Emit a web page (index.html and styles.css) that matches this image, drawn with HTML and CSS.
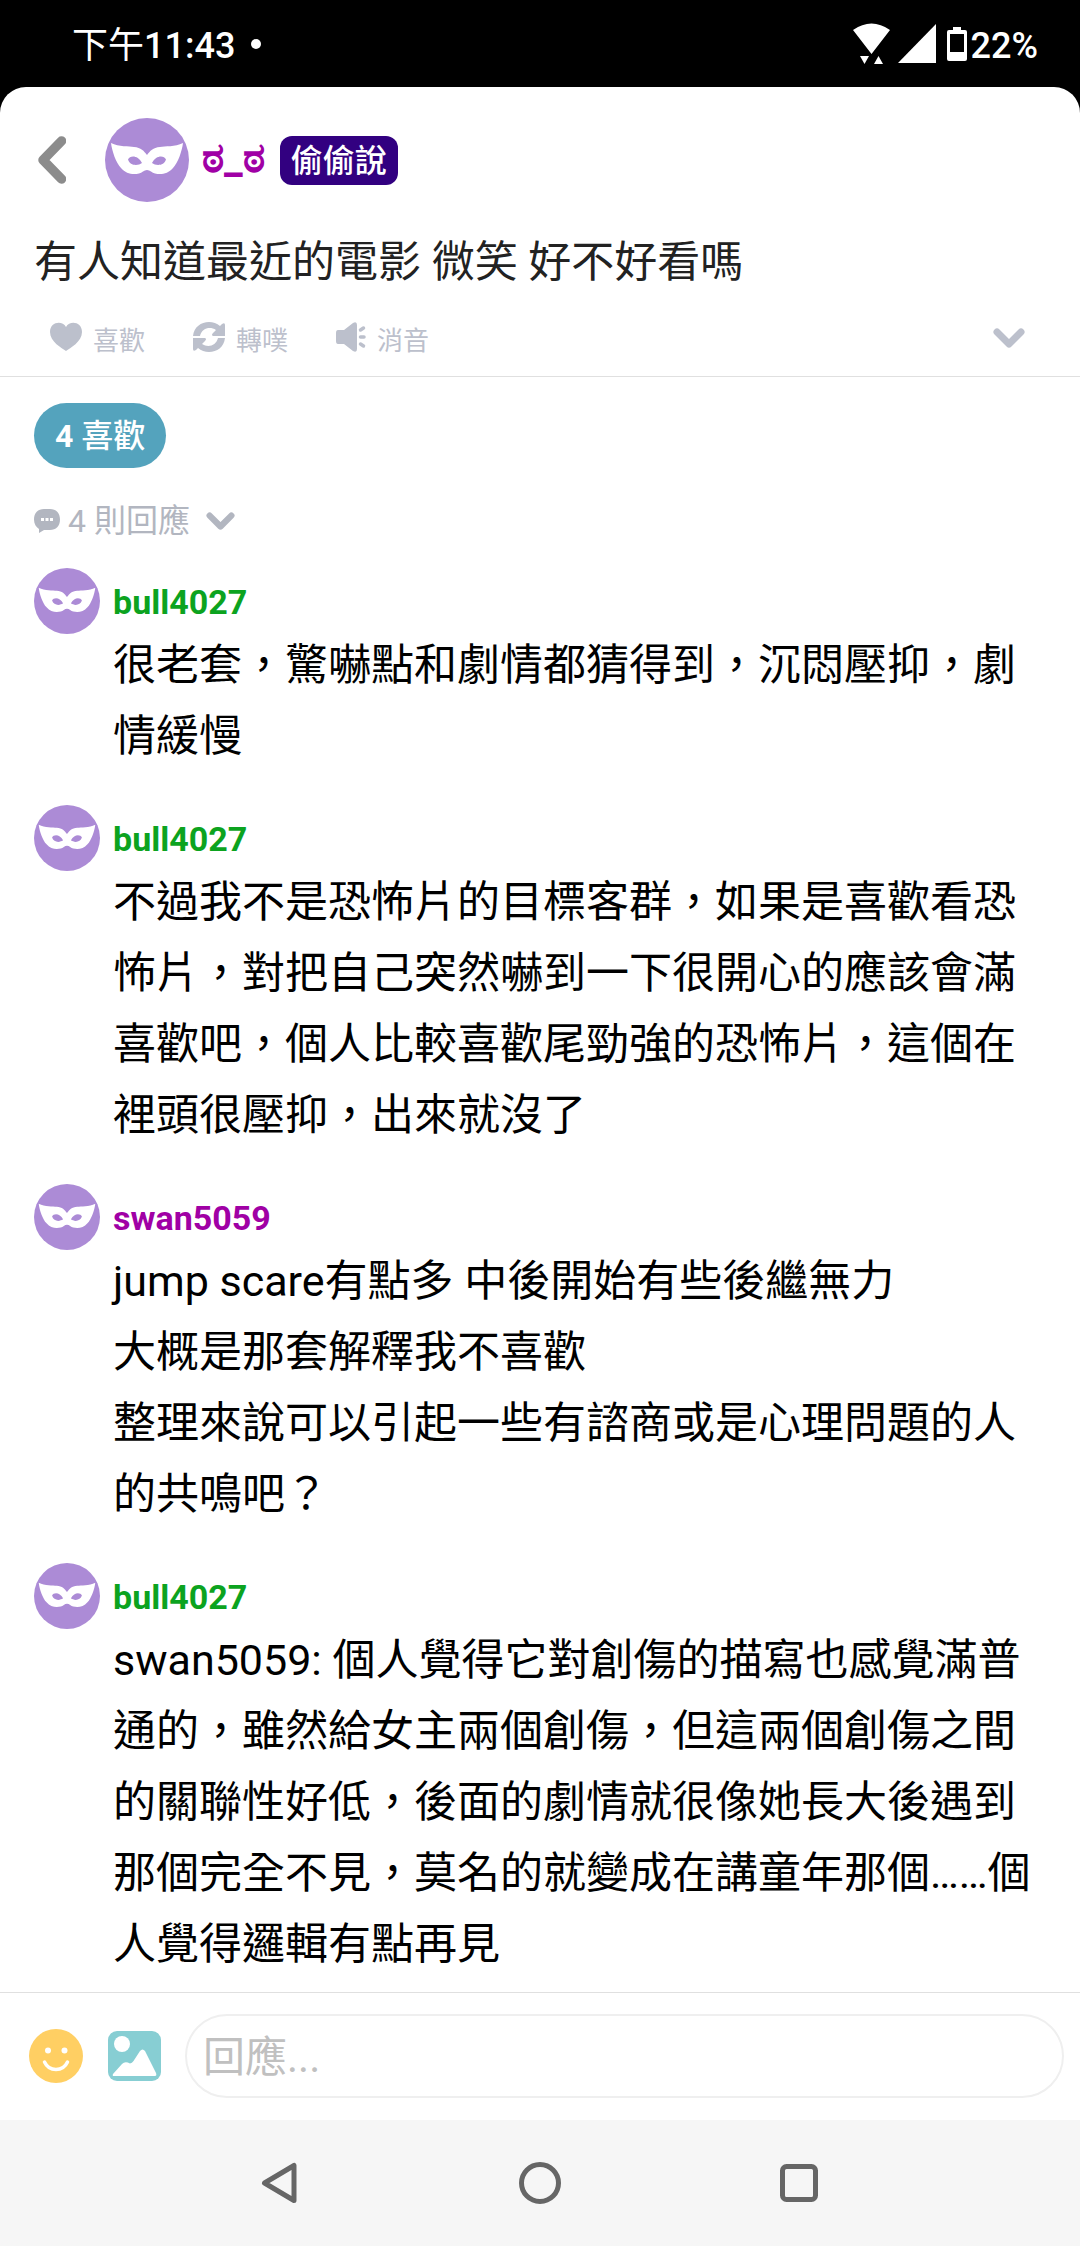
FILE: index.html
```html
<!DOCTYPE html>
<html lang="zh-Hant">
<head>
<meta charset="utf-8">
<meta name="viewport" content="width=device-width, initial-scale=1">
<title>偷偷說</title>
<link rel="stylesheet" href="styles.css">
</head>
<body>
<svg class="defs" aria-hidden="true">
  <symbol id="mask" viewBox="0 0 84 84">
    <circle cx="42" cy="42" r="42" fill="#ac8bd6"/>
    <path fill="#fff" fill-rule="evenodd" d="M6 25C14 29 24 28 29 29C36 29.500 39 33 42 37C45 33 48 29.500 55 29C60 28 70 29 78 25C77 33 73 45 68 50C63 56 56 57 50 55.500C47 55 45 52 42 52C39 52 37 55 34 55.500C28 57 21 56 16 50C11 45 7 33 6 25ZM23 41.500C25 37 33 37 37 45C33 48 25 48 23 41.500ZM61 41.500C59 37 51 37 47 45C51 48 59 48 61 41.500Z"/>
  </symbol>
  <symbol id="chevron" viewBox="0 0 32 21">
    <path d="M4 4L16 16L28 4" fill="none" stroke="currentColor" stroke-width="7" stroke-linecap="round" stroke-linejoin="round"/>
  </symbol>
</svg>

<div class="status">
  <time class="clock">下午<b>11:43</b></time>
  <span class="dot"></span>
  <div class="indicators">
    <svg class="wifi" viewBox="0 0 37 41"><path fill="#fff" d="M0 7Q18.500 -6 37 7L18.500 31ZM7 33H16L11.500 41ZM21 41H30L25.500 33Z"/></svg>
    <svg class="signal" viewBox="0 0 38 39"><path fill="#fff" d="M38 0V39H0Z"/></svg>
    <svg class="battery" viewBox="0 0 20 34"><path fill="#fff" fill-rule="evenodd" d="M6 0H14V3H18Q20 3 20 5V32Q20 34 18 34H2Q0 34 0 32V5Q0 3 2 3H6ZM3 7V25H17V7Z"/></svg>
    <b class="percent">22%</b>
  </div>
</div>

<div class="app">
  <header class="post">
    <div class="author">
      <button class="back" aria-label="返回"><svg viewBox="0 0 28 48"><path d="M23.500 5L5 24L23.500 43" fill="none" stroke="#8c8c8c" stroke-width="9.500" stroke-linecap="round" stroke-linejoin="round"/></svg></button>
      <svg class="avatar-large" aria-hidden="true"><use href="#mask"/></svg>
      <span class="nick">ಠ_ಠ</span>
      <span class="badge">偷偷說</span>
    </div>
    <h1 class="title">有人知道最近的電影 微笑 好不好看嗎</h1>
    <div class="actions">
      <button class="action">
        <svg class="action-icon" viewBox="0 0 32 32"><path fill="currentColor" d="M16 30C12 27 0 21 0 11C0 1 12 -1 16 6C20 -1 32 1 32 11C32 21 20 27 16 30Z"/></svg>
        <span>喜歡</span>
      </button>
      <button class="action">
        <svg class="action-icon" viewBox="0 0 32 32"><path fill="currentColor" d="M0 15C1 6 8 1 16 1C20 1 24 2.500 27 5L29 3Q32 1 32 4V15H20Q18 14 20 12L23 9C17 5 9 7 7 15ZM32 17C31 26 24 31 16 31C12 31 8 29.500 5 27L3 29Q0 31 0 28V17H12Q14 18 12 20L9 23C15 27 23 25 25 17Z"/></svg>
        <span>轉噗</span>
      </button>
      <button class="action">
        <svg class="mute-icon" viewBox="0 0 30 32"><path fill="currentColor" d="M2 9H8L17 2Q21 0 21 4V28Q21 32 17 30L8 23H2Q0 23 0 20V12Q0 9 2 9Z"/><path d="M24.500 9L27.500 7M24.500 16H28M24.500 23L27.500 25" stroke="currentColor" stroke-width="3.500" stroke-linecap="round"/></svg>
        <span>消音</span>
      </button>
      <button class="more" aria-label="更多"><svg class="chevron"><use href="#chevron"/></svg></button>
    </div>
  </header>

  <main class="thread">
    <button class="likes"><b>4</b>&nbsp;喜歡</button>
    <button class="count">
      <svg class="bubble" viewBox="0 0 26 24"><path fill="currentColor" fill-rule="evenodd" d="M10 0H16C22 0 26 4 26 10.500S22 21 16 21H10L5 24V20C2 18 0 15 0 10.500C0 4 4 0 10 0ZM7 9V12H10V9ZM11.500 9V12H14.500V9ZM16 9V12H19V9Z"/></svg>
      <span>4 則回應</span>
      <svg class="chevron-small"><use href="#chevron"/></svg>
    </button>

    <ul class="comments">
      <li class="comment">
        <svg class="avatar" aria-hidden="true"><use href="#mask"/></svg>
        <div class="body">
          <a href="#" class="name green">bull4027</a>
          <p class="text">很老套，驚嚇點和劇情都猜得到，沉悶壓抑，劇情緩慢</p>
        </div>
      </li>
      <li class="comment">
        <svg class="avatar" aria-hidden="true"><use href="#mask"/></svg>
        <div class="body">
          <a href="#" class="name green">bull4027</a>
          <p class="text">不過我不是恐怖片的目標客群，如果是喜歡看恐怖片，對把自己突然嚇到一下很開心的應該會滿喜歡吧，個人比較喜歡尾勁強的恐怖片，這個在裡頭很壓抑，出來就沒了</p>
        </div>
      </li>
      <li class="comment">
        <svg class="avatar" aria-hidden="true"><use href="#mask"/></svg>
        <div class="body">
          <a href="#" class="name purple">swan5059</a>
          <p class="text">jump scare有點多 中後開始有些後繼無力<br>大概是那套解釋我不喜歡<br>整理來說可以引起一些有諮商或是心理問題的人的共鳴吧？</p>
        </div>
      </li>
      <li class="comment">
        <svg class="avatar" aria-hidden="true"><use href="#mask"/></svg>
        <div class="body">
          <a href="#" class="name green">bull4027</a>
          <p class="text">swan5059: 個人覺得它對創傷的描寫也感覺滿普通的，雖然給女主兩個創傷，但這兩個創傷之間的關聯性好低，後面的劇情就很像她長大後遇到那個完全不見，莫名的就變成在講童年那個……個人覺得邏輯有點再見</p>
        </div>
      </li>
    </ul>
  </main>

  <form class="reply">
    <button type="button" class="tool" aria-label="表情符號">
      <svg viewBox="0 0 54 54"><circle cx="27" cy="27" r="27" fill="#ffcf63"/><circle cx="19" cy="21.500" r="3" fill="#fff"/><circle cx="35.500" cy="21.500" r="3" fill="#fff"/><path d="M15.500 33Q19 40.500 27 40.500T38.500 33" fill="none" stroke="#fff" stroke-width="3.500" stroke-linecap="round"/></svg>
    </button>
    <button type="button" class="tool" aria-label="圖片">
      <svg viewBox="0 0 54 54"><rect x="1" y="2" width="53" height="50" rx="9" fill="#87ced3"/><circle cx="15" cy="15" r="8" fill="#fff"/><path fill="#fff" d="M6 45L15 35Q18 32 23 34.500Q25 34 26.500 32L33 22Q35.500 19 38 22L49 44Q50 47 48 47H7Q5 47 6 45Z"/></svg>
    </button>
    <input class="field" type="text" placeholder="回應..." aria-label="回應">
  </form>
</div>

<nav class="system">
  <button aria-label="返回"><svg viewBox="0 0 42 42"><path d="M4.500 21L34 3.500V38.500Z"/></svg></button>
  <button aria-label="主畫面"><svg viewBox="0 0 42 42"><circle cx="21" cy="21" r="18.500"/></svg></button>
  <button aria-label="最近使用"><svg viewBox="0 0 42 42"><rect x="4.500" y="4.500" width="33" height="33" rx="4"/></svg></button>
</nav>
</body>
</html>
```
FILE: styles.css
```css
* { box-sizing: border-box; }

body {
  margin: 0;
  min-height: 100vh;
  display: flex;
  flex-direction: column;
  background: #000;
  color: #000;
  font-family: Roboto, "Noto Sans CJK TC", sans-serif;
}

button {
  display: flex;
  align-items: center;
  padding: 0;
  border: 0;
  background: none;
  color: inherit;
  font: inherit;
  line-height: 40px;
}

svg { display: block; flex: none; }
.defs { position: absolute; width: 0; height: 0; }

/* Status bar */
.status {
  display: flex;
  align-items: center;
  height: 87px;
  padding: 0 42px 0 72px;
  color: #fff;
  font-size: 36px;
  line-height: 40px;
}
.status b { font-weight: 500; }
.clock, .percent { padding-top: 4px; }
.dot { width: 10px; height: 10px; margin-left: 16px; border-radius: 50%; background: #fff; }
.indicators { display: flex; align-items: center; margin-left: auto; }
.wifi { width: 37px; height: 41px; margin-right: 8px; }
.signal { width: 38px; height: 39px; margin-right: 11px; }
.battery { width: 20px; height: 34px; margin-right: 4px; }

/* Post */
.app {
  flex: 1;
  display: flex;
  flex-direction: column;
  border-radius: 26px 26px 0 0;
  background: #fff;
}
.post { padding: 31px 34px 0; border-bottom: 1px solid #e0e0e0; }
.author { display: flex; align-items: center; }
.back { width: 71px; height: 84px; padding-left: 4px; }
.back svg { width: 28px; height: 48px; }
.avatar-large { width: 84px; height: 84px; margin-right: 13px; }
.nick {
  margin-right: 15px;
  padding-bottom: 4px;
  color: #a000a5;
  font-size: 42px;
  font-weight: 700;
  line-height: 48px;
}
.badge {
  height: 49px;
  padding: 2px 11px 0;
  border-radius: 12px;
  background: #320080;
  color: #fff;
  font-size: 32px;
  font-weight: 500;
  line-height: 47px;
}
.title {
  margin: 25px 0 0;
  color: #222;
  font-size: 43px;
  font-weight: 400;
  line-height: 71px;
}
.actions {
  display: flex;
  align-items: center;
  gap: 48px;
  height: 78px;
  padding: 0 21px 0 16px;
  color: #bcc0cc;
  font-size: 26px;
}
.action { gap: 11px; }
.action span { padding-top: 8px; }
.action-icon { width: 32px; height: 32px; }
.mute-icon { width: 30px; height: 32px; }
.more { margin-left: auto; padding-top: 3px; }
.chevron { width: 32px; height: 21px; }

/* Replies */
.thread { flex: 1; padding: 26px 34px 12px; }
.likes {
  height: 65px;
  padding: 0 21px;
  border-radius: 33px;
  background: #54a3bd;
  color: #fff;
  font-size: 32px;
  font-weight: 500;
}
.count { height: 48px; margin: 29px 0 23px; color: #b2b6c0; font-size: 32px; }
.bubble { width: 26px; height: 24px; margin-right: 8px; }
.chevron-small { width: 29px; height: 19px; margin-left: 16px; }

.comments {
  display: flex;
  flex-direction: column;
  gap: 33px;
  margin: 0;
  padding: 0;
  list-style: none;
}
.comment { display: flex; gap: 13px; }
.avatar { width: 66px; height: 66px; }
.body { flex: 1; min-width: 0; }
.name {
  display: block;
  padding-top: 6px;
  font-size: 34px;
  font-weight: 700;
  line-height: 56px;
  text-decoration: none;
}
.green { color: #0ca31f; }
.purple { color: #a000a5; }
.text { margin: 0; font-size: 43px; line-height: 71px; }

/* Reply box */
.reply {
  display: flex;
  align-items: center;
  gap: 24px;
  padding: 21px 16px 22px 29px;
  border-top: 1px solid #e0e0e0;
}
.tool svg { width: 54px; height: 54px; }
.field {
  flex: 1;
  min-width: 0;
  height: 84px;
  padding: 2px 16px 0;
  border: 2px solid #efefef;
  border-radius: 42px;
  background: #fff;
  color: #000;
  font: inherit;
  font-size: 42px;
}
.field::placeholder { color: #c0c0c0; opacity: 1; }

/* System navigation */
.system {
  display: flex;
  justify-content: center;
  height: 126px;
  background: #f6f6f6;
}
.system button { width: 24%; justify-content: center; }
.system svg {
  width: 42px;
  height: 42px;
  fill: none;
  stroke: #666;
  stroke-width: 5;
  stroke-linejoin: round;
}
```
